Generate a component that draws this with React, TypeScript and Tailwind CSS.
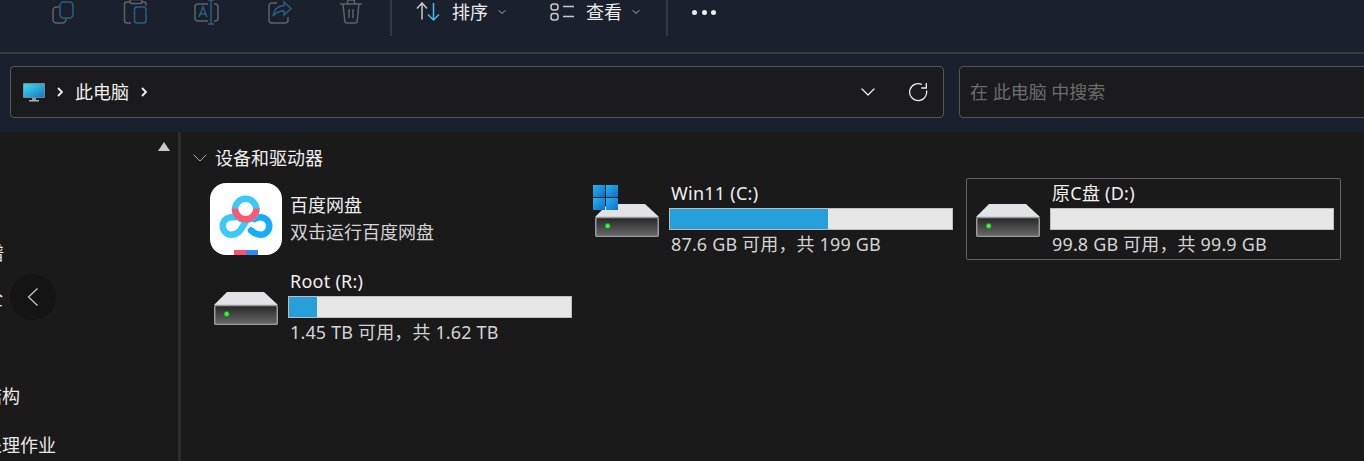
import { ChevronDown } from "lucide-react";

const font = "font-['Noto_Sans','Noto_Sans_CJK_SC',sans-serif]";

function CopyIcon() {
  return (
    <svg width="28" height="28" viewBox="0 0 28 28" fill="none" strokeWidth="1.5">
      <path d="M10 9H7.500A3.500 3.500 0 0 0 4 12.500V21.500A3.500 3.500 0 0 0 7.500 25h6a3.500 3.500 0 0 0 3.500-3.500V21" stroke="#5e6269" />
      <rect x="11" y="4" width="13" height="16" rx="3.500" stroke="#2a5f85" />
    </svg>
  );
}

function PasteIcon() {
  return (
    <svg width="28" height="28" viewBox="0 0 28 28" fill="none" strokeWidth="1.5">
      <path d="M9 4H6A2.500 2.500 0 0 0 3.500 6.500v16A2.500 2.500 0 0 0 6 25h4M21 4h1.500A2.500 2.500 0 0 1 25 6.500V8" stroke="#5e6269" />
      <rect x="9" y="1.500" width="12" height="4" rx="1.500" stroke="#5e6269" />
      <rect x="13.500" y="9" width="11.500" height="16" rx="2.500" stroke="#2a5f85" />
    </svg>
  );
}

function RenameIcon() {
  return (
    <svg width="28" height="28" viewBox="0 0 28 28" fill="none" strokeWidth="1.5">
      <path d="M15 6H5a3 3 0 0 0-3 3v11a3 3 0 0 0 3 3h10M21 6h1a3 3 0 0 1 3 3v11a3 3 0 0 1-3 3h-1" stroke="#5e6269" />
      <path d="M18 2v24M15 2h6M15 26h6M6 19l4-10 4 10M7.500 16h5" stroke="#2a5f85" />
    </svg>
  );
}

function ShareIcon() {
  return (
    <svg width="28" height="28" viewBox="0 0 28 28" fill="none" strokeWidth="1.5">
      <path d="M12 5H7a3 3 0 0 0-3 3v14a3 3 0 0 0 3 3h13a3 3 0 0 0 3-3v-3" stroke="#5e6269" />
      <path d="M19 4l7 6.500-7 6.500v-4c-5 0-8 1-11 5 1-7 5-10 11-10.500z" stroke="#2a5f85" />
    </svg>
  );
}

function TrashIcon() {
  return (
    <svg width="28" height="28" viewBox="0 0 28 28" fill="none" stroke="#5e6269" strokeWidth="1.5">
      <path d="M3 6h22M10.500 5.500V4a2 2 0 0 1 2-2h3a2 2 0 0 1 2 2v1.500M6 6l1.800 17A2 2 0 0 0 9.800 25h8.400a2 2 0 0 0 2-2L22 6M12 11v9M16 11v9" />
    </svg>
  );
}

function SortIcon() {
  return (
    <svg width="24" height="20" viewBox="0 0 24 20" fill="none" strokeWidth="1.5">
      <path d="M6 17.500V1M1 6.500 6 1l5 5.500" stroke="#c9c9c9" />
      <path d="M17.500 1v17M12 12.500 17.500 18l5.500-5.500" stroke="#4cb8f0" />
    </svg>
  );
}

function ViewIcon() {
  return (
    <svg width="24" height="18" viewBox="0 0 24 18" fill="none" stroke="#c9c9c9" strokeWidth="1.500">
      <rect x="1" y="1" width="7" height="6" rx="2.500" />
      <rect x="1" y="10.500" width="7" height="6.500" rx="2.500" />
      <path d="M13 3.500h11M13 13.500h11" />
    </svg>
  );
}

function MonitorIcon() {
  return (
    <svg width="22" height="19" viewBox="0 0 22 19">
      <defs>
        <linearGradient id="screen" x1="0" y1="0" x2="1" y2="1">
          <stop offset="0" stopColor="#3fdcec" />
          <stop offset="1" stopColor="#1578c4" />
        </linearGradient>
      </defs>
      <rect x="0" y="0" width="22" height="15" rx="1" fill="#7c8a96" />
      <rect x="0.800" y="1.200" width="20.400" height="13" fill="url(#screen)" />
      <rect x="9" y="15" width="4" height="2" fill="#8c949c" />
      <rect x="6" y="17" width="10" height="1.500" fill="#aab0b6" />
    </svg>
  );
}

function ArrowRight() {
  return (
    <svg width="6" height="10" viewBox="0 0 6 10" fill="none" stroke="#f2f2f2" strokeWidth="1.800">
      <path d="M1 1l4 4-4 4" />
    </svg>
  );
}

function RefreshIcon() {
  return (
    <svg width="20" height="20" viewBox="0 0 20 20" fill="none" stroke="#ededed" strokeWidth="1.300">
      <path d="M18.500 8.500A8.500 8.500 0 1 1 14 2.500" />
      <path d="M18.300 1v5h-5" />
    </svg>
  );
}

function DriveIcon({ id }: { id: string }) {
  return (
    <svg width="64" height="33" viewBox="0 0 64 33" className="block">
      <defs>
        <linearGradient id={`front-${id}`} x1="0" y1="0" x2="0" y2="1">
          <stop offset="0" stopColor="#262626" />
          <stop offset="1" stopColor="#6a6a6a" />
        </linearGradient>
        <radialGradient id={`led-${id}`}>
          <stop offset="0.500" stopColor="#3cf03c" />
          <stop offset="1" stopColor="#0f7a1a" />
        </radialGradient>
      </defs>
      <path d="M13 0h37l14 13H0z" fill="#e2e3e7" />
      <rect x="0.750" y="13.500" width="62.500" height="19" rx="1.500" fill={`url(#front-${id})`} stroke="#9a9a9a" strokeWidth="1.500" />
      <circle cx="12.700" cy="22" r="3" fill={`url(#led-${id})`} />
    </svg>
  );
}

function WindowsLogo() {
  return (
    <svg width="25" height="25" viewBox="0 0 25 25" className="absolute left-[-2px] top-[-19px]">
      <defs>
        <linearGradient id="win" x1="0" y1="0" x2="1" y2="1">
          <stop offset="0" stopColor="#27b3ec" />
          <stop offset="1" stopColor="#0a6fce" />
        </linearGradient>
      </defs>
      <rect x="0" y="0" width="12" height="12" fill="url(#win)" />
      <rect x="13" y="0" width="12" height="12" fill="url(#win)" />
      <rect x="0" y="13" width="12" height="12" fill="url(#win)" />
      <rect x="13" y="13" width="12" height="12" fill="url(#win)" />
    </svg>
  );
}

function BaiduIcon() {
  return (
    <div className="h-[72px] w-[72px] overflow-hidden rounded-[16px] bg-white">
      <svg width="72" height="72" viewBox="0 0 72 72" fill="none" strokeWidth="6.500">
        <path d="M28 33.500C26 34 24 34.250 21.500 34.250A8.750 8.750 0 1 0 21.500 51.750C27 51.750 31 47 33 43L36 38" stroke="#3cc8f8" />
        <path d="M41 47.500C44 50 47 51.750 50.500 51.750A8.750 8.750 0 0 0 50.500 34.250C48 34.250 46 35 44.500 36" stroke="#12aefc" strokeLinecap="round" />
        <circle cx="35.700" cy="26.500" r="10.700" stroke="#3cc8f8" />
        <path d="M25 25.500A10.700 10.700 0 0 0 46.400 25.500" stroke="#fb5a72" />
        <rect x="24" y="67" width="12" height="5" fill="#fb5072" />
        <rect x="36" y="67" width="12" height="5" fill="#2f8cf5" />
      </svg>
    </div>
  );
}

function DriveTile({
  id,
  name,
  free,
  used,
  selected,
  windows,
}: {
  id: string;
  name: string;
  free: string;
  used: number;
  selected?: boolean;
  windows?: boolean;
}) {
  return (
    <div
      className={`flex h-[82px] w-[375px] rounded-[2px] border pl-[9px] ${selected ? "border-[#636363]" : "border-transparent"}`}
    >
      <div className="relative mt-[25px] h-[33px] w-[64px] shrink-0">
        {windows && <WindowsLogo />}
        <DriveIcon id={id} />
      </div>
      <div className="ml-[10px] w-[284px]">
        <div className="mt-[1px] h-[26px] pl-[2px] text-[18px] leading-[26px] tracking-[0.25px] text-[#f0f0f0]">{name}</div>
        <div className="mt-[2px] h-[22px] border border-[#bcbcbc] bg-[#e6e6e6]">
          <div className="h-full bg-[#26a0da]" style={{ width: `${used}%` }} />
        </div>
        <div className="mt-[1px] pl-[2px] text-[18px] leading-[26px] tracking-[0.15px] text-[#d4d4d4]">{free}</div>
      </div>
    </div>
  );
}

export default function App() {
  return (
    <div className={`flex h-[461px] w-[1364px] flex-col overflow-hidden bg-[#1a1a1a] ${font}`}>
      {/* command bar */}
      <div className="flex h-[54px] shrink-0 items-start border-b-2 border-[#3b3b3d] bg-[#1a202c] pl-[27px]">
        <div className="flex -mt-[2px]">
          <div className="flex w-[72px] justify-center"><CopyIcon /></div>
          <div className="flex w-[72px] justify-center"><PasteIcon /></div>
          <div className="flex w-[72px] justify-center"><RenameIcon /></div>
          <div className="flex w-[72px] justify-center"><ShareIcon /></div>
          <div className="flex w-[72px] justify-center"><TrashIcon /></div>
        </div>
        <div className="ml-[3px] h-[36px] w-[2px] bg-[#33373f]" />
        <div className="ml-[24px] flex h-[24px] items-center">
          <SortIcon />
          <span className="ml-[12px] text-[18px] leading-[24px] text-[#ececec]">排序</span>
          <ChevronDown className="ml-[8px] text-[#b4b4b4]" size={12} />
        </div>
        <div className="ml-[42px] flex h-[24px] items-center">
          <ViewIcon />
          <span className="ml-[12px] text-[18px] leading-[24px] text-[#ececec]">查看</span>
          <ChevronDown className="ml-[8px] text-[#b4b4b4]" size={12} />
        </div>
        <div className="ml-[24px] h-[36px] w-[2px] bg-[#33373f]" />
        <div className="ml-[24px] flex h-[25px] items-center gap-[4.500px]">
          <span className="h-[5px] w-[5px] rounded-full bg-[#eeeeee]" />
          <span className="h-[5px] w-[5px] rounded-full bg-[#eeeeee]" />
          <span className="h-[5px] w-[5px] rounded-full bg-[#eeeeee]" />
        </div>
      </div>

      {/* address row */}
      <div className="flex h-[78px] shrink-0 gap-[15px] bg-[#1a202e] pl-[10px] pt-[12px]">
        <div className="flex h-[52px] w-[934px] shrink-0 items-center rounded-[4px] border border-[#555555] bg-[#1b1b1d] pl-[12px]">
          <MonitorIcon />
          <div className="ml-[12px]"><ArrowRight /></div>
          <span className="ml-[12px] text-[18px] leading-[24px] text-[#f2f2f2]">此电脑</span>
          <div className="ml-[12px]"><ArrowRight /></div>
          <ChevronDown className="ml-auto text-[#ededed]" size={24} strokeWidth={1.3} />
          <div className="ml-[28px] mr-[15px]"><RefreshIcon /></div>
        </div>
        <div className="flex h-[52px] w-[420px] shrink-0 items-center rounded-[4px] border border-[#555555] bg-[#1b1b1d] pl-[10px]">
          <span className="whitespace-pre text-[18px] leading-[24px] text-[#6c6c6c]">在 此电脑 中搜索</span>
        </div>
      </div>

      {/* body */}
      <div className="flex min-h-0 flex-1">
        <div className="relative w-[178px] shrink-0 overflow-hidden">
          <div className="absolute left-[158px] top-[10px] h-0 w-0 border-x-[6.500px] border-b-[9px] border-x-transparent border-b-[#cbcbcb]" />
          <div className="ml-[-32px] mt-[109px] h-[24px] whitespace-nowrap text-[18px] leading-[24px] text-[#e8e8e8]">图谱</div>
          <div className="ml-[-33px] mt-[21px] h-[24px] whitespace-nowrap text-[18px] leading-[24px] text-[#e8e8e8]">安全</div>
          <div className="ml-[-16px] mt-[74px] h-[24px] whitespace-nowrap text-[18px] leading-[24px] text-[#e8e8e8]">结构</div>
          <div className="ml-[-16px] mt-[25px] h-[24px] whitespace-nowrap text-[18px] leading-[24px] text-[#e8e8e8]">处理作业</div>
          <div className="absolute left-[10px] top-[142px] flex h-[46px] w-[46px] items-center justify-center rounded-full bg-[#141414]">
            <svg width="12" height="20" viewBox="0 0 12 20" fill="none" stroke="#c4c4c4" strokeWidth="1.300">
              <path d="M10.500 1.500 1.500 10l9 8.500" />
            </svg>
          </div>
        </div>
        <div className="w-[3px] shrink-0 bg-[#2c2c2c]" />

        <div className="min-w-0 flex-1 pl-[23px] pt-[14px]">
          <div className="-ml-[16px] flex h-[24px] items-center text-[18px] leading-[24px] text-[#eeeeee]">
            <ChevronDown className="text-[#a8a8a8]" size={24} strokeWidth={1} />
            <span className="ml-[3px]">设备和驱动器</span>
          </div>
          <div className="mt-[8px] grid grid-cols-[repeat(3,375px)] gap-[6px]">
            <div className="flex h-[82px] w-[375px] items-start pl-[6px] pt-[5px]">
              <BaiduIcon />
              <div className="ml-[8px] mt-[9px]">
                <div className="text-[18px] leading-[27px] text-[#f0f0f0]">百度网盘</div>
                <div className="text-[18px] leading-[27px] text-[#d4d4d4]">双击运行百度网盘</div>
              </div>
            </div>
            <DriveTile id="c" name="Win11 (C:)" free="87.6 GB 可用，共 199 GB" used={56} windows />
            <DriveTile id="d" name="原C盘 (D:)" free="99.8 GB 可用，共 99.9 GB" used={0} selected />
            <DriveTile id="r" name="Root (R:)" free="1.45 TB 可用，共 1.62 TB" used={10} />
          </div>
        </div>
      </div>
    </div>
  );
}
